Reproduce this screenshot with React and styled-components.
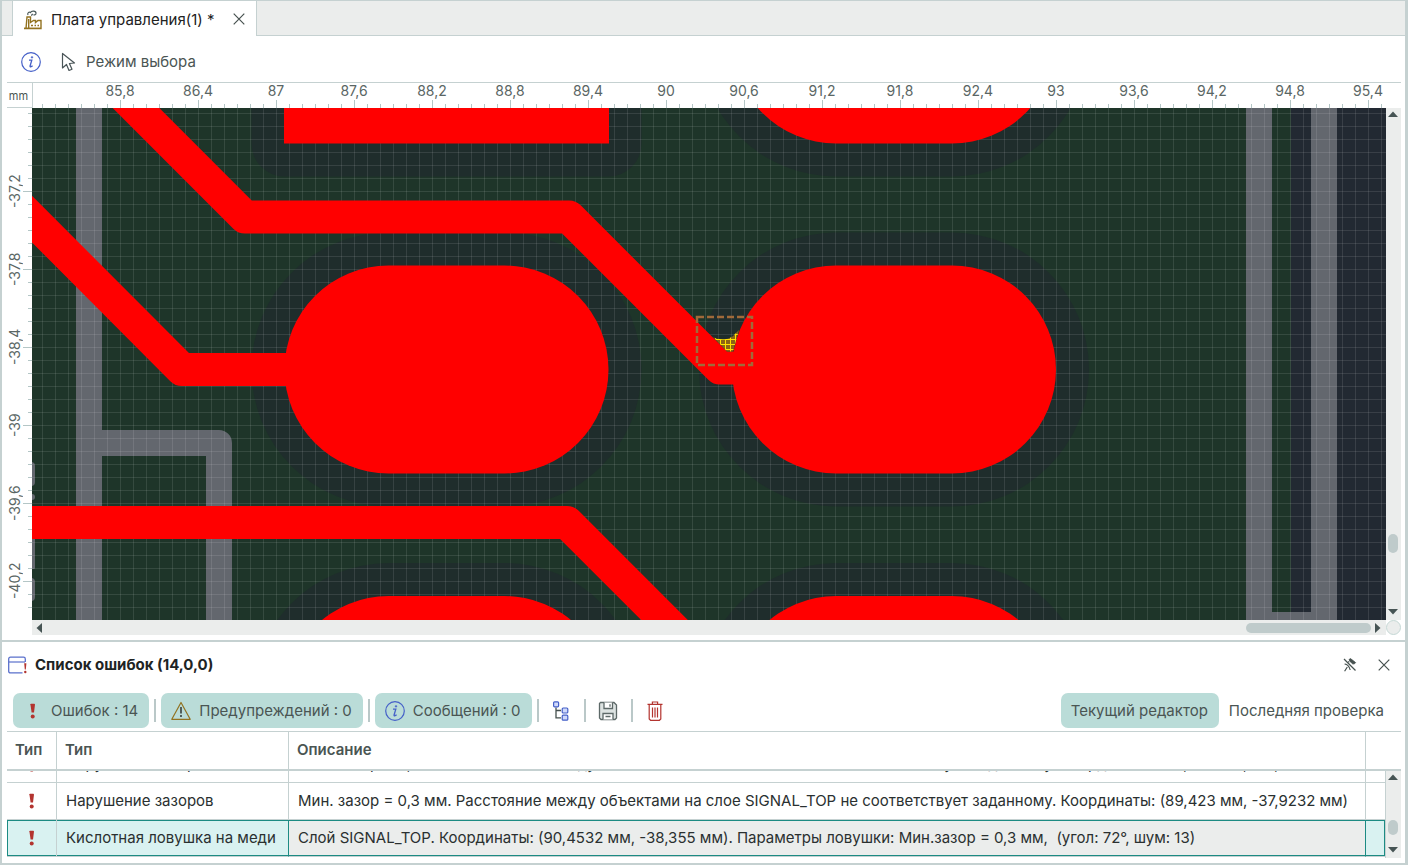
import React, { useState } from 'react';
import styled, { createGlobalStyle } from 'styled-components';

const COLUMNS = ['85,8', '86,4', '87', '87,6', '88,2', '88,8', '89,4', '90', '90,6', '91,2', '91,8', '92,4', '93', '93,6', '94,2', '94,8', '95,4'];
const ROWS = ['-37,2', '-37,8', '-38,4', '-39', '-39,6', '-40,2'];

const ERRORS = [
  {
    id: 12,
    type: 'Нарушение зазоров',
    text: 'Мин. зазор = 0,3 мм. Расстояние между объектами на слое SIGNAL_TOP не соответствует заданному. Координаты: (89,423 мм, -37,9232 мм)',
  },
  {
    id: 13,
    type: 'Нарушение зазоров',
    text: 'Мин. зазор = 0,3 мм. Расстояние между объектами на слое SIGNAL_TOP не соответствует заданному. Координаты: (89,423 мм, -37,9232 мм)',
  },
  {
    id: 14,
    type: 'Кислотная ловушка на меди',
    text: 'Слой SIGNAL_TOP. Координаты: (90,4532 мм, -38,355 мм). Параметры ловушки: Мин.зазор = 0,3 мм,  (угол: 72°, шум: 13)',
  },
];

function FactoryIcon() {
  return (
    <svg width="20" height="20" viewBox="0 0 20 20" fill="none">
      <path d="M1 18.5H18V10.5H15L12.5 12.5V10.5H10.5L7.5 12.5V7H4L3 18.5" stroke="#927220" strokeWidth="1.4" />
      <path d="M5.7 9V18M1 18.4H18" stroke="#927220" strokeWidth="1.4" />
      <path d="M8 15.5H10M11.5 15.5H13M14.5 15.5H16" stroke="#927220" strokeWidth="1.6" />
      <path d="M5 5C4 3 6 1.5 7.5 2.5C8.5 0.5 13 0.6 13 3.2C13 4.8 11.5 5.4 10.5 4.6M8 5.2C9 5.2 9.5 4.6 9.4 3.8" stroke="#4a5a5a" strokeWidth="1.2" />
    </svg>
  );
}

function InfoIcon() {
  return (
    <svg width="20" height="20" viewBox="0 0 20 20" fill="none" stroke="#4560c8">
      <circle cx="10" cy="10" r="9.3" strokeWidth="1.2" />
      <path d="M8 8.2H10.8L9 14.2C8.9 15 10.2 15 11.6 13.8" strokeWidth="1.3" />
      <circle cx="11" cy="5.3" r="0.9" fill="#4560c8" strokeWidth="0.4" />
    </svg>
  );
}

function CursorIcon() {
  return (
    <svg width="16" height="20" viewBox="0 0 16 20" fill="none" stroke="#4a5558" strokeWidth="1.2">
      <path d="M1.5 1.5V16L5.5 12.5L8 18.5L11 17.3L8.4 11.5L13.5 11Z" strokeLinejoin="round" />
    </svg>
  );
}

function CloseIcon() {
  return (
    <svg width="12" height="12" viewBox="0 0 12 12" stroke="#46514f" strokeWidth="1.2">
      <path d="M0.7 0.7L11.3 11.3M11.3 0.7L0.7 11.3" />
    </svg>
  );
}

function UnpinIcon() {
  return (
    <svg width="14" height="14" viewBox="0 0 14 14" fill="none" stroke="#46514f">
      <path d="M1 1L12.5 12.5" strokeWidth="1.3" />
      <path d="M6 1.6L7.5 0.6L12.6 4.6L11.5 5.8L9.8 6L7 3.4Z" fill="#46514f" strokeWidth="0.8" />
      <path d="M1.6 6.2C3.5 5.6 6.8 8.6 7.2 12M4.3 9L1.6 13.2M5.2 3.4L6.3 4.2" strokeWidth="1.2" />
    </svg>
  );
}

function ErrorListIcon() {
  return (
    <svg width="20" height="18" viewBox="0 0 20 18" fill="none">
      <path d="M15.5 16.8H3.5C2.3 16.8 1.7 16.3 1.7 15.2V3C1.7 1.8 2.3 1.2 3.5 1.2H16.5C17.7 1.2 18.3 1.8 18.3 3V6" stroke="#5a70cc" strokeWidth="1.3" />
      <path d="M1.7 6H18" stroke="#5a70cc" strokeWidth="1.2" />
      <path d="M17.2 7.2H19.4L18.8 13.4H17.8Z" fill="#b3342f" />
      <circle cx="18.3" cy="16" r="1.2" fill="#b3342f" />
    </svg>
  );
}

function ErrorIcon() {
  return (
    <svg width="20" height="20" viewBox="0 0 20 20" fill="#b3342f">
      <path d="M7.4 3.2C7.4 2.6 12 2.6 12 3.2L11 11.6H8.6Z" />
      <circle cx="9.7" cy="15.6" r="2" />
    </svg>
  );
}

function WarningIcon() {
  return (
    <svg width="20" height="20" viewBox="0 0 20 20" fill="none">
      <path d="M10 1.5L19.2 18.3H0.8Z" stroke="#927220" strokeWidth="1.2" strokeLinejoin="round" />
      <path d="M10 6V12.5M10 14V16" stroke="#46514f" strokeWidth="1.8" />
    </svg>
  );
}

function TreeIcon() {
  return (
    <svg width="18" height="20" viewBox="0 0 18 20" fill="none">
      <path d="M4 6.5V16.8H9M4 9.5H9" stroke="#46514f" strokeWidth="1.3" />
      <g fill="#cfd9fb" stroke="#4560c8" strokeWidth="1.2">
        <rect x="1.6" y="0.8" width="5" height="5" rx="1" />
        <rect x="10.2" y="7" width="5.6" height="5" rx="1" />
        <rect x="10.2" y="14.2" width="5.6" height="5" rx="1" />
      </g>
    </svg>
  );
}

function SaveIcon() {
  return (
    <svg width="20" height="20" viewBox="0 0 20 20" fill="none" stroke="#5d6968" strokeWidth="1.3">
      <path d="M2.5 1.5H16L18.5 4V17L17 18.5H3L1.5 17V2.5Z" fill="#dde3e2" />
      <path d="M6 1.5V7.5H14.5V1.5" fill="#fff" />
      <path d="M5 18.5V12.5H15V18.5" fill="#fff" />
      <path d="M12 3.2V5.8M7.5 15.5H12.5" />
    </svg>
  );
}

function TrashIcon() {
  return (
    <svg width="16" height="20" viewBox="0 0 16 20" fill="none" stroke="#b3342f" strokeWidth="1.2">
      <path d="M0.5 3.4H15.5M5.4 3.2V1H10.6V3.2" />
      <path d="M2.2 3.6V18L3.6 19.3H12.4L13.8 18V3.6" />
      <path d="M5.5 6.5V16.5M8 6.5V16.5M10.5 6.5V16.5" />
    </svg>
  );
}

function Arrow({ dir }) {
  const paths = {
    up: 'M0 6L5 0.5L10 6Z',
    down: 'M0 0L5 5.5L10 0Z',
    left: 'M6 0L0.5 5L6 10Z',
    right: 'M0 0L5.5 5L0 10Z',
  };
  const upright = dir === 'up' || dir === 'down';
  return (
    <svg width={upright ? 10 : 6} height={upright ? 6 : 10} fill="#465454">
      <path d={paths[dir]} />
    </svg>
  );
}

// Copper pad 324x208 with a 33px clearance around it
function Pad({ x, y }) {
  return <rect x={x} y={y} width="324" height="208" rx="104" fill="#ff0000" />;
}

function Clearance({ x, y, rx = 137 }) {
  return <rect x={x - 33} y={y - 33} width="390" height="274" rx={rx} fill="#1f2d2c" />;
}

function Board() {
  return (
    <BoardSvg>
      <defs>
        <pattern id="grid" x="42" y="113" width="13" height="13" patternUnits="userSpaceOnUse">
          <path d="M0 0.5H13M0.5 0V13" stroke="#ffffff" strokeOpacity="0.1" />
        </pattern>
        <pattern id="trap" x="720" y="339" width="5" height="5" patternUnits="userSpaceOnUse">
          <rect width="5" height="5" fill="#8c6414" />
          <path d="M0 0.5H5M0.5 0V5" stroke="#ffe000" />
        </pattern>
      </defs>
      <g transform="translate(-32 -108)">
        <rect x="32" y="108" width="1259" height="1200" fill="#1e3529" />
        <rect x="1291" y="108" width="2400" height="1200" fill="#222932" />
        <Clearance x={284.5} y={-64.5} rx={33} />
        <Clearance x={732} y={-64.5} />
        <Clearance x={284.5} y={265.5} />
        <Clearance x={732} y={265.5} />
        <Clearance x={284.5} y={596} />
        <Clearance x={732} y={596} />
        <g fill="none" stroke="#63676e" strokeWidth="26" strokeLinejoin="round">
          <path d="M89 100V640" />
          <path d="M89 443H219V640" />
          <path d="M1259 100V625H1324V100" />
        </g>
        <g fill="#63676e">
          <rect x="22" y="462" width="13" height="24" rx="4" />
          <circle cx="32" cy="497" r="3" />
          <rect x="22" y="530" width="13" height="39" rx="1" />
          <rect x="22" y="578" width="13" height="23" rx="4" />
        </g>
        <rect x="32" y="108" width="3600" height="1200" fill="url(#grid)" />
        <rect x="284" y="0" width="325" height="143.5" fill="#ff0000" />
        <Pad x={732} y={-64.5} />
        <Pad x={284.5} y={265.5} />
        <Pad x={732} y={265.5} />
        <Pad x={284.5} y={596} />
        <Pad x={732} y={596} />
        <g fill="none" stroke="#ff0000" strokeWidth="33" strokeLinejoin="round">
          <path d="M116 88L245 217H569L720 368H840" />
          <path d="M12 199L182 369.5H400" />
          <path d="M12 522.5H567L700 655.5" />
        </g>
        <path d="M713 337C718 340 730 341 735 334L739 330L733 351.5H727Z" fill="url(#trap)" />
        <rect x="697" y="317" width="55" height="48" fill="none" stroke="#a06a3a" strokeWidth="2.5" strokeDasharray="7 3" />
      </g>
    </BoardSvg>
  );
}

function App() {
  const [selected, setSelected] = useState(14);
  const [scope, setScope] = useState('editor');

  return (
    <Window>
      <GlobalStyle />
      <TabBar>
        <Tab>
          <FactoryIcon />
          Плата управления(1) *
          <TabClose aria-label="Закрыть вкладку">
            <CloseIcon />
          </TabClose>
        </Tab>
      </TabBar>

      <ModeBar>
        <InfoIcon />
        <Mode>
          <CursorIcon />
          Режим выбора
        </Mode>
      </ModeBar>

      <Editor>
        <Unit>mm</Unit>
        <TopRuler>
          {COLUMNS.map(label => (
            <TopMark key={label}>{label}</TopMark>
          ))}
        </TopRuler>
        <LeftRuler>
          {ROWS.map(label => (
            <LeftMark key={label}>
              <span>{label}</span>
            </LeftMark>
          ))}
        </LeftRuler>
        <Board />
        <ScrollY>
          <Arrow dir="up" />
          <Track $before={83} $after={10}>
            <Thumb $length={19} />
          </Track>
          <Arrow dir="down" />
        </ScrollY>
        <ScrollX>
          <Arrow dir="left" />
          <TrackX>
            <ThumbX />
          </TrackX>
          <Arrow dir="right" />
        </ScrollX>
        <Corner />
      </Editor>

      <Panel>
        <PanelHeader>
          <ErrorListIcon />
          <PanelTitle>Список ошибок (14,0,0)</PanelTitle>
          <IconButton aria-label="Открепить">
            <UnpinIcon />
          </IconButton>
          <IconButton aria-label="Закрыть">
            <CloseIcon />
          </IconButton>
        </PanelHeader>

        <PanelTools>
          <Toggle $active>
            <ErrorIcon />
            Ошибок : 14
          </Toggle>
          <Separator />
          <Toggle $active>
            <WarningIcon />
            Предупреждений : 0
          </Toggle>
          <Separator />
          <Toggle $active>
            <InfoIcon />
            Сообщений : 0
          </Toggle>
          <Separator />
          <ToolButton aria-label="Дерево">
            <TreeIcon />
          </ToolButton>
          <Separator />
          <ToolButton aria-label="Сохранить">
            <SaveIcon />
          </ToolButton>
          <Separator />
          <ToolButton aria-label="Удалить">
            <TrashIcon />
          </ToolButton>
          <Scope>
            <Toggle $active={scope === 'editor'} onClick={() => setScope('editor')}>
              Текущий редактор
            </Toggle>
            <Toggle $active={scope === 'last'} onClick={() => setScope('last')}>
              Последняя проверка
            </Toggle>
          </Scope>
        </PanelTools>

        <HeadTable>
          <Columns />
          <thead>
            <tr>
              <Th>Тип</Th>
              <Th>Тип</Th>
              <Th>Описание</Th>
              <Th />
              <Th />
            </tr>
          </thead>
        </HeadTable>
        <Body>
          <BodyView>
            <BodyTable>
              <Columns body />
              <tbody>
                {ERRORS.map(error => (
                  <Row
                    key={error.id}
                    $selected={error.id === selected}
                    onClick={() => setSelected(error.id)}
                  >
                    <Td>
                      <ErrorIcon />
                    </Td>
                    <Td>{error.type}</Td>
                    <Td>{error.text}</Td>
                    <Td />
                  </Row>
                ))}
              </tbody>
            </BodyTable>
          </BodyView>
          <ScrollY>
            <Arrow dir="up" />
            <Track $before={40} $after={7}>
              <Thumb $length={15} />
            </Track>
            <Arrow dir="down" />
          </ScrollY>
        </Body>
      </Panel>
    </Window>
  );
}

function Columns({ body }) {
  return (
    <colgroup>
      <Col $width="50px" />
      <Col $width="232px" />
      <Col />
      <Col $width={body ? '19px' : '20px'} />
      {!body && <Col $width="15px" />}
    </colgroup>
  );
}

export default App;

const GlobalStyle = createGlobalStyle`
  * {
    box-sizing: border-box;
  }

  body {
    margin: 0;
    color: #4a5553;
    font-family: Inter, 'Noto Sans', sans-serif;
    font-size: 15px;
    line-height: 20px;
    background: #fff;
  }

  svg {
    display: block;
    flex-shrink: 0;
  }

  button {
    padding: 0;
    border: 0;
    color: inherit;
    font: inherit;
    background: none;
    cursor: pointer;
  }
`;

const Window = styled.div`
  display: flex;
  flex-direction: column;
  height: 100vh;
  border: solid #c5d1d1;
  border-width: 1px 3px 2px 2px;
`;

const TabBar = styled.div`
  display: flex;
  height: 35px;
  padding-left: 10px;
  background: #ebedec;
  box-shadow: inset 0 -1px #c5d1d1;
`;

const Tab = styled.div`
  display: flex;
  align-items: center;
  gap: 8px;
  padding: 2px 5px 0 10px;
  border: solid #c5d1d1;
  border-width: 0 1px;
  color: #222;
  background: #fff;
`;

const IconButton = styled.button`
  display: flex;
  align-items: center;
  justify-content: center;
  width: 34px;
  height: 24px;
`;

const TabClose = styled(IconButton)`
  width: 24px;
  margin: 0 0 2px 4px;
`;

const ModeBar = styled.div`
  display: flex;
  align-items: center;
  gap: 20px;
  height: 46px;
  padding: 6px 19px 0;
`;

const Mode = styled.div`
  display: flex;
  align-items: center;
  gap: 9px;
`;

const Editor = styled.div`
  display: grid;
  flex: 1;
  grid-template-columns: 25px minmax(0, 1fr) 15px;
  grid-template-rows: 25px minmax(0, 1fr) 15px;
  min-height: 0;
  margin: 0 4px 5px 5px;
  border-top: 1px solid #c5d1d1;
`;

const Unit = styled.div`
  display: flex;
  align-items: center;
  justify-content: center;
  padding: 2px 2px 0 0;
  border-bottom: 1px solid #c5d1d1;
  font-size: 11px;
`;

const TopRuler = styled.div`
  display: flex;
  grid-column: 2;
  margin-right: 1px;
  padding-left: 48px;
  overflow: hidden;
  border-left: 1px solid #c5d1d1;
  color: #5a6664;
  font-size: 14px;
  line-height: 16px;
  background:
    repeating-linear-gradient(90deg, #b4c6c6 0 1px, transparent 1px 78px) 87px 100% / 100% 8px no-repeat,
    repeating-linear-gradient(90deg, #b4c6c6 0 1px, transparent 1px 13px) 9px 100% / 100% 4px no-repeat;
`;

const TopMark = styled.div`
  flex: 0 0 78px;
  text-align: center;
`;

const LeftRuler = styled.div`
  display: flex;
  grid-column: 1;
  flex-direction: column;
  padding-top: 44px;
  overflow: hidden;
  color: #5a6664;
  font-size: 14px;
  line-height: 16px;
  background:
    repeating-linear-gradient(180deg, #b4c6c6 0 1px, transparent 1px 78px) 100% 83px / 9px 100% no-repeat,
    repeating-linear-gradient(180deg, #b4c6c6 0 1px, transparent 1px 13px) 100% 5px / 4px 100% no-repeat;
`;

const LeftMark = styled.div`
  display: flex;
  flex: 0 0 78px;
  align-items: center;
  writing-mode: vertical-rl;
  transform: rotate(180deg);
  justify-content: center;

  span {
    width: 16px;
    margin-left: 9px;
  }
`;

const BoardSvg = styled.svg`
  width: 100%;
  height: 100%;
`;

const ScrollY = styled.div`
  display: flex;
  flex: 0 0 15px;
  flex-direction: column;
  align-items: center;
  gap: 6px;
  padding: 3px 1px 5px 0;
  background: #ebedec;
`;

const Track = styled.div`
  display: flex;
  flex: 1;
  flex-direction: column;

  &::before {
    content: '';
    flex: ${({ $before }) => $before};
  }

  &::after {
    content: '';
    flex: ${({ $after }) => $after};
  }
`;

const Thumb = styled.div`
  flex: 0 0 ${({ $length }) => $length}px;
  width: 10px;
  border-radius: 5px;
  background: #bfcbcb;
`;

const ScrollX = styled.div`
  display: flex;
  grid-column: 2;
  align-items: center;
  gap: 4px;
  padding: 0 5px 0 4px;
  background: #ebedec;
`;

const TrackX = styled.div`
  display: flex;
  flex: 1;
  justify-content: flex-end;
`;

const ThumbX = styled.div`
  width: 125px;
  height: 10px;
  border-radius: 5px;
  background: #bfcbcb;
`;

const Corner = styled.div`
  width: 15px;
  height: 15px;
  border: 1px solid #c5d8d5;
  border-radius: 50%;
  background: #ebedec;
`;

const Panel = styled.section`
  border-top: 2px solid #c5d1d1;
  padding: 0 4px 5px 5px;
`;

const PanelHeader = styled.header`
  display: flex;
  align-items: center;
  height: 45px;
`;

const PanelTitle = styled.h2`
  flex: 1;
  margin: 0 0 0 8px;
  color: #1e2424;
  font-size: 15px;
  font-weight: 650;
`;

const PanelTools = styled.div`
  display: flex;
  align-items: center;
  gap: 5px;
  height: 44px;
  padding: 3px 6px 0;
`;

const Toggle = styled.button`
  display: flex;
  align-items: center;
  gap: 8px;
  height: 35px;
  padding: 0 11px 0 10px;
  border-radius: 7px;
  white-space: nowrap;
  background: ${({ $active }) => ($active ? '#badcd8' : 'transparent')};
`;

const ToolButton = styled.button`
  display: flex;
  align-items: center;
  justify-content: center;
  width: 35px;
  height: 35px;
`;

const Separator = styled.div`
  width: 2px;
  height: 23px;
  background: #bac8c8;
`;

const Scope = styled.div`
  display: flex;
  margin-left: auto;
`;

const Col = styled.col`
  width: ${({ $width }) => $width || 'auto'};
`;

const HeadTable = styled.table`
  width: 100%;
  border-top: 1px solid #c5d1d1;
  border-bottom: 2px solid #c5d1d1;
  border-spacing: 0;
  table-layout: fixed;
`;

const Th = styled.th`
  height: 37px;
  padding: 0 8px 2px;
  border-right: 1px solid #c5d1d1;
  font-size: 15px;
  font-weight: 600;
  text-align: left;

  &:nth-child(n + 4) {
    padding: 0;
    border: 0;
  }
`;

const Body = styled.div`
  display: flex;
  height: 87px;
`;

const BodyView = styled.div`
  display: flex;
  flex: 1;
  align-items: flex-end;
  min-width: 0;
  padding-bottom: 1px;
  overflow: hidden;
  border-right: 1px solid #c5d1d1;
`;

const BodyTable = styled.table`
  width: 100%;
  border-spacing: 0;
  table-layout: fixed;
`;

const Td = styled.td`
  height: 37px;
  padding: 0 9px;
  border: solid #c5d1d1;
  border-width: 0 1px 1px 0;
  color: #2a3030;
  white-space: pre;

  &:first-child {
    padding: 0 15px;
  }

  &:last-child {
    padding: 0;
    border-right: 0;
  }
`;

const Row = styled.tr`
  ${({ $selected }) =>
    $selected &&
    `
    td {
      background: #d9f2f1;
      box-shadow: inset 0 1px #1c8b83, inset 0 -1px #1c8b83;
    }

    td:first-child {
      box-shadow: inset 1px 1px #1c8b83, inset 0 -1px #1c8b83;
    }

    td:nth-child(2),
    td:nth-child(3) {
      border-right-color: #1c8b83;
    }

    td:nth-child(3) {
      background: #ebedec;
    }

    td:last-child {
      box-shadow: inset -1px 1px #1c8b83, inset 0 -1px #1c8b83;
    }
  `}
`;
